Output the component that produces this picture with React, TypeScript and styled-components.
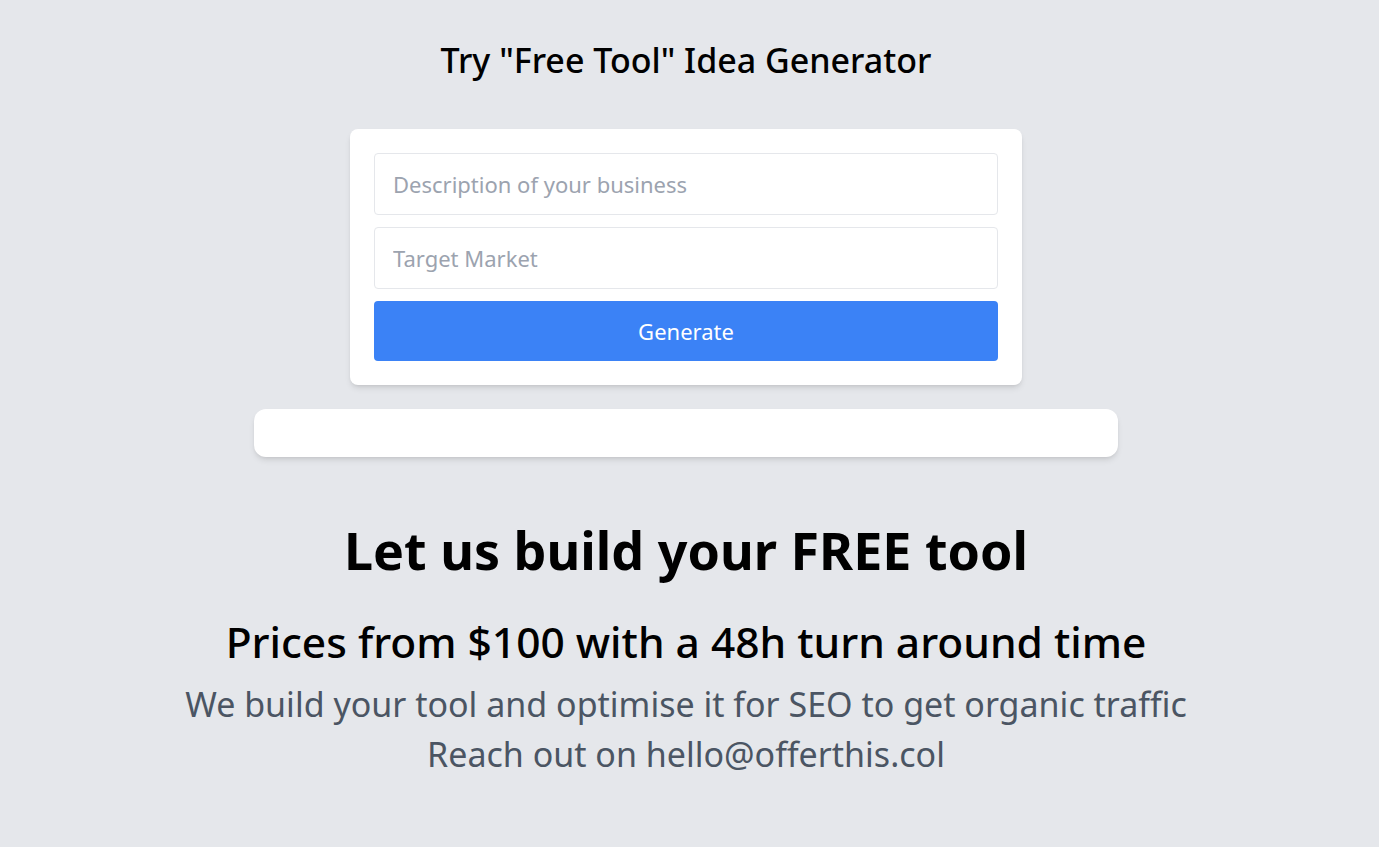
import styled, { createGlobalStyle } from 'styled-components'

const GlobalStyle = createGlobalStyle`
  html, body {
    margin: 0;
    padding: 0;
    background: #e5e7eb;
    font-family: "Noto Sans", "Open Sans", sans-serif;
    color: #000;
  }
  * {
    box-sizing: border-box;
  }
`

const App = () => {
  return (
    <Page>
      <GlobalStyle />
      <Title>Try "Free Tool" Idea Generator</Title>
      <Card>
        <Field placeholder="Description of your business" />
        <Field placeholder="Target Market" />
        <GenerateButton>Generate</GenerateButton>
      </Card>
      <ResultBox />
      <Pitch>
        <Headline>Let us build your FREE tool</Headline>
        <Subline>Prices from $100 with a 48h turn around time</Subline>
        <Blurb>We build your tool and optimise it for SEO to get organic traffic</Blurb>
        <Blurb>Reach out on hello@offerthis.col</Blurb>
      </Pitch>
    </Page>
  )
}

export default App

// content column sits 7px left of centre in the reference (scrollbar gutter)
const Page = styled.div`
  display: flex;
  flex-direction: column;
  align-items: center;
  min-height: 100vh;
  padding: 40px 7px 0 0;
`

const Title = styled.h1`
  font-size: 34px;
  line-height: 40px;
  font-weight: 500;
  margin: 0 0 49px 0;
`

const Card = styled.div`
  display: flex;
  flex-direction: column;
  gap: 12px;
  width: 672px;
  padding: 24px;
  background: #fff;
  border-radius: 8px;
  box-shadow: 0 4px 6px -1px rgba(0, 0, 0, 0.1), 0 2px 4px -2px rgba(0, 0, 0, 0.1);
`

const Field = styled.input`
  height: 62px;
  padding: 0 18px;
  font-family: inherit;
  font-size: 22px;
  border: 1px solid #e5e7eb;
  border-radius: 4px;
  outline: none;
  background: #fff;

  &::placeholder {
    color: #9ca3af;
  }
`

const GenerateButton = styled.button`
  height: 60px;
  border: none;
  border-radius: 4px;
  background: #3b82f6;
  color: #fff;
  font-family: inherit;
  font-size: 22px;
  cursor: pointer;
`

const ResultBox = styled.div`
  width: 864px;
  height: 48px;
  margin-top: 24px;
  background: #fff;
  border-radius: 12px;
  box-shadow: 0 4px 6px -1px rgba(0, 0, 0, 0.1), 0 2px 4px -2px rgba(0, 0, 0, 0.1);
`

const Pitch = styled.div`
  display: flex;
  flex-direction: column;
  align-items: center;
  margin-top: 65px;
  text-align: center;
`

const Headline = styled.h2`
  font-size: 52px;
  line-height: 56px;
  font-weight: 700;
  margin: 0 0 40px 0;
`

const Subline = styled.h3`
  font-size: 42.5px;
  line-height: 48px;
  font-weight: 500;
  margin: 0 0 13px 0;
`

const Blurb = styled.p`
  font-size: 34px;
  line-height: 50px;
  color: #4b5563;
  margin: 0;
`
